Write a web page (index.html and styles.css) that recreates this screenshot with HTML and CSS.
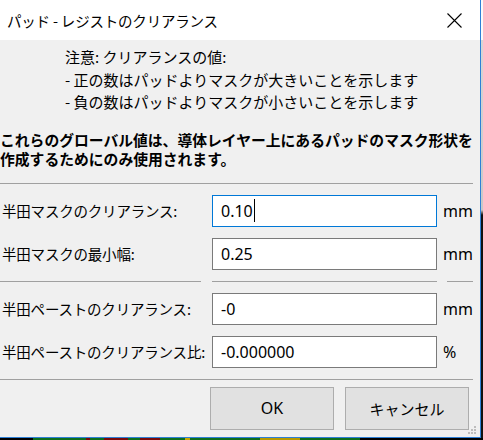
FILE: index.html
```html
<!DOCTYPE html>
<html lang="ja">
<head>
<meta charset="utf-8">
<title>パッド - レジストのクリアランス</title>
<link rel="stylesheet" href="styles.css">
</head>
<body>
<div class="desk">
  <div class="top">
    <div class="dialog">
      <div class="titlebar">
        <span class="title">パッド - レジストのクリアランス</span>
        <svg class="close" width="15" height="15" viewBox="0 0 15 15"><path d="M0.5 0.5 L14.5 14.5 M14.5 0.5 L0.5 14.5" stroke="#000" stroke-width="1.1" fill="none"/></svg>
      </div>
      <div class="content">
        <div class="note">
          <div>注意: クリアランスの値:</div>
          <div>- 正の数はパッドよりマスクが大きいことを示します</div>
          <div>- 負の数はパッドよりマスクが小さいことを示します</div>
        </div>
        <div class="bold">これらのグローバル値は、導体レイヤー上にあるパッドのマスク形状を<br>作成するためにのみ使用されます。</div>
        <div class="sep"></div>
        <div class="grid">
          <div class="label">半田マスクのクリアランス:</div>
          <div class="field focus"><span class="val">0.10</span><span class="caret"></span></div>
          <div class="unit">mm</div>

          <div class="label">半田マスクの最小幅:</div>
          <div class="field"><span class="val">0.25</span></div>
          <div class="unit">mm</div>

          <div class="gsep"></div>
          <div class="gsep"></div>
          <div class="gsep unit-sep"></div>

          <div class="label">半田ペーストのクリアランス:</div>
          <div class="field"><span class="val">-0</span></div>
          <div class="unit">mm</div>

          <div class="label">半田ペーストのクリアランス比:</div>
          <div class="field"><span class="val">-0.000000</span></div>
          <div class="unit">%</div>
        </div>
        <div class="sep sep2"></div>
        <div class="buttons">
          <div class="btn latin">OK</div>
          <div class="btn">キャンセル</div>
        </div>
        <svg class="grip" width="10" height="10" viewBox="0 0 10 10">
          <rect x="7" y="1" width="2" height="2" fill="#bdbdbd"/>
          <rect x="4" y="4" width="2" height="2" fill="#bdbdbd"/>
          <rect x="7" y="4" width="2" height="2" fill="#bdbdbd"/>
          <rect x="1" y="7" width="2" height="2" fill="#bdbdbd"/>
          <rect x="4" y="7" width="2" height="2" fill="#bdbdbd"/>
          <rect x="7" y="7" width="2" height="2" fill="#bdbdbd"/>
        </svg>
      </div>
    </div>
    <div class="side"></div>
  </div>
  <div class="pcb"></div>
</div>
</body>
</html>
```
FILE: styles.css
```css
* { box-sizing: border-box; }
html, body { margin: 0; padding: 0; }
body {
  width: 483px;
  height: 440px;
  overflow: hidden;
  background: #0b0b0b;
  font-family: "Noto Sans CJK JP", "Noto Sans", sans-serif;
  color: #000;
}
.desk { display: flex; flex-direction: column; width: 483px; height: 440px; }
.top { display: flex; height: 438px; }
.dialog {
  width: 481px;
  height: 438px;
  border-right: 1px solid #2e7fd6;
  border-bottom: 1px solid #2e7fd6;
  background: #f0f0f0;
  display: flex;
  flex-direction: column;
}
.side {
  flex: 1;
  background: linear-gradient(to bottom, #fafafa 0, #fafafa 40px, #d6d6d6 40px, #c8c8c8 210px, #111 215px, #111 100%);
}
.pcb {
  height: 2px;
  background: linear-gradient(to right, #000 0 33px, #0c6e1c 33px 86px, #7a0a0a 86px 90px, #0c6e1c 90px 104px, #7a0a0a 104px 128px, #0c6e1c 128px 140px, #7a0a0a 140px 160px, #0c6e1c 160px 185px, #c8a800 185px 190px, #0c6e1c 190px 260px, #b89a00 260px 300px, #0c6e1c 300px 360px, #000 360px 483px);
}
.titlebar {
  height: 40px;
  background: #fff;
  display: flex;
  align-items: center;
  padding-left: 7px;
  padding-right: 18px;
}
.title { font-size: 14.5px; letter-spacing: -0.2px; }
.close { margin-left: auto; }
.content { position: relative; flex: 1; width: 480px; }
.note {
  margin-top: 6px;
  padding-left: 65px;
  font-size: 15px;
  line-height: 22.5px;
}
.bold {
  margin-top: 16px;
  font-size: 14.8px;
  font-weight: bold;
  line-height: 19.5px;
  white-space: nowrap;
}
.sep { margin-top: 14px; width: 473px; height: 1px; background: #a0a0a0; }
.grid {
  margin-top: 11px;
  display: grid;
  grid-template-columns: 201px 225px 30px;
  column-gap: 11px;
  grid-template-rows: 32px 32px 1px 32px 32px;
  row-gap: 11px;
  width: 473px;
}
.label {
  padding-left: 2px;
  font-size: 14.5px;
  white-space: nowrap;
  display: flex;
  align-items: center;
  letter-spacing: -0.2px;
}
.field {
  background: #fff;
  border: 1px solid #7a7a7a;
  display: flex;
  align-items: center;
  padding-left: 8px;
  font-family: "Noto Sans", sans-serif;
  font-size: 16px;
}
.field.focus { border-color: #0078d7; }
.caret { width: 1px; height: 23px; background: #000; margin-left: 1px; }
.unit {
  margin-left: -5px;
  font-family: "Noto Sans", sans-serif;
  font-size: 16px;
  display: flex;
  align-items: center;
  width: 32px;
  white-space: nowrap;
}
.gsep { height: 1px; background: #a0a0a0; }
.unit-sep { width: 26px; margin-left: -1px; }
.sep2 { margin-top: 11px; }
.buttons {
  margin-top: 7px;
  display: flex;
  gap: 11px;
  padding-left: 210px;
}
.btn {
  width: 124px;
  height: 43px;
  background: #e1e1e1;
  border: 1px solid #adadad;
  display: flex;
  align-items: center;
  justify-content: center;
  font-size: 15px;
}
.btn.latin { font-family: "Noto Sans", sans-serif; font-size: 16px; }
.grip { position: absolute; right: 3px; bottom: 2px; }
```
